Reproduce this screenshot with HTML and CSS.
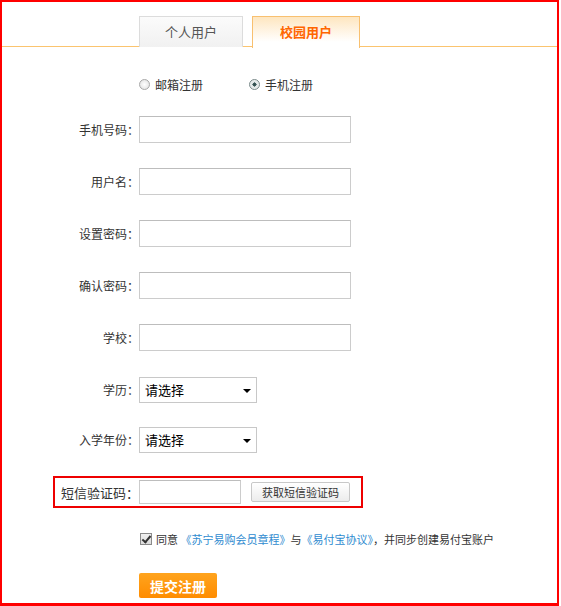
FILE: index.html
```html
<!DOCTYPE html>
<html lang="zh-CN">
<head>
    <meta charset="UTF-8">
    <title>校园用户注册</title>
    <link rel="stylesheet" href="styles.css">
</head>
<body>
    <div class="page">
        <div class="tabs">
            <div class="tab">个人用户</div>
            <div class="tab active">校园用户</div>
        </div>

        <div class="reg-type">
            <label class="radio-item"><span class="radio"></span>邮箱注册</label>
            <label class="radio-item"><span class="radio checked"></span>手机注册</label>
        </div>

        <form class="reg-form">
            <div class="row">
                <span class="label">手机号码：</span>
                <input type="text" class="field">
            </div>
            <div class="row">
                <span class="label">用户名：</span>
                <input type="text" class="field">
            </div>
            <div class="row">
                <span class="label">设置密码：</span>
                <input type="password" class="field">
            </div>
            <div class="row">
                <span class="label">确认密码：</span>
                <input type="password" class="field">
            </div>
            <div class="row">
                <span class="label">学校：</span>
                <input type="text" class="field">
            </div>
            <div class="row row-select">
                <span class="label">学历：</span>
                <div class="select">请选择<span class="arrow"></span></div>
            </div>
            <div class="row row-select">
                <span class="label">入学年份：</span>
                <div class="select">请选择<span class="arrow"></span></div>
            </div>
            <div class="sms-row">
                <span class="label">短信验证码：</span>
                <input type="text" class="field field-sms">
                <button type="button" class="btn-sms">获取短信验证码</button>
            </div>
            <div class="agree">
                <span class="checkbox"></span>
                <span>同意 <a href="#">《苏宁易购会员章程》</a>与<a href="#">《易付宝协议》</a>，并同步创建易付宝账户</span>
            </div>
            <div class="submit-row">
                <button type="submit" class="btn-submit">提交注册</button>
            </div>
        </form>
    </div>
</body>
</html>
```

FILE: styles.css
```css
/* Reset */
* {
    margin: 0;
    padding: 0;
    box-sizing: border-box;
}

body {
    font-family: "Noto Sans CJK SC", "Liberation Sans", sans-serif;
    font-size: 12px;
    color: #333;
    background: #fff;
}

/* Outer frame */
.page {
    width: 559px;
    height: 606px;
    border: 2px solid #f00;
    border-bottom-width: 3px;
    overflow: hidden;
}

/* Tabs */
.tabs {
    display: flex;
    gap: 9px;
    padding: 14px 0 0 137px;
    border-bottom: 1px solid #fbc46f;
    height: 45px;
}

.tab {
    width: 104px;
    height: 31px;
    line-height: 30px;
    text-align: center;
    font-size: 13px;
    color: #555;
    border: 1px solid #dcdcdc;
    border-bottom: none;
    background: linear-gradient(#fbfbfb, #f1f1f1);
}

.tab.active {
    width: 108px;
    color: #f60;
    font-weight: bold;
    border-color: #f8c070;
    background: linear-gradient(#fee6c0, #fff 80%);
    height: 32px;
    margin-bottom: -1px;
}

/* Register type radios */
.reg-type {
    display: flex;
    gap: 46px;
    padding-left: 137px;
    margin-top: 28px;
    height: 18px;
    align-items: center;
}

.radio-item {
    display: flex;
    align-items: center;
    gap: 5px;
    color: #333;
}

.radio {
    width: 11px;
    height: 11px;
    border-radius: 50%;
    border: 1px solid #a8a8a8;
    background: radial-gradient(#fff, #ddd);
}

.radio.checked {
    border-color: #7a8a8a;
    background: radial-gradient(circle, #2f4a4a 0, #3f5f5f 30%, #dfe6e6 35%, #f4f4f4 100%);
}

/* Form rows */
.reg-form {
    margin-top: 23px;
}

.row {
    display: flex;
    align-items: center;
    height: 27px;
    margin-bottom: 25px;
}

.row-select {
    margin-top: 2px;
    margin-bottom: 23px;
}

.label {
    width: 137px;
    text-align: right;
    color: #333;
}

.field {
    width: 212px;
    height: 27px;
    border: 1px solid #ccc;
    border-top-color: #bdbdbd;
    outline: none;
    padding: 0 4px;
    font-size: 12px;
}

.select {
    width: 118px;
    height: 26px;
    border: 1px solid #c8c8c8;
    display: flex;
    align-items: center;
    padding-left: 5px;
    font-size: 13px;
    color: #000;
    position: relative;
}

.arrow {
    position: absolute;
    right: 5px;
    top: 11px;
    border-left: 4px solid transparent;
    border-right: 4px solid transparent;
    border-top: 4px solid #000;
}

/* SMS row (highlighted) */
.sms-row {
    display: flex;
    align-items: center;
    width: 310px;
    height: 32px;
    margin: 3px 0 0 51px;
    border: 2px solid #e00;
}

.sms-row .label {
    width: 84px;
    font-size: 13px;
}

.field-sms {
    width: 102px;
    height: 24px;
}

.btn-sms {
    margin-left: 10px;
    width: 99px;
    height: 20px;
    font-family: inherit;
    font-size: 11px;
    color: #333;
    border: 1px solid #c8c8c8;
    border-radius: 2px;
    background: linear-gradient(#fff, #ececec);
    cursor: pointer;
}

/* Agreement */
.agree {
    display: flex;
    align-items: center;
    gap: 4px;
    margin: 23px 0 0 138px;
    height: 16px;
    font-size: 11px;
    color: #333;
}

.checkbox {
    width: 12px;
    height: 12px;
    border: 1px solid #8a8a8a;
    background: linear-gradient(#f0f0f0, #dcdcdc);
    position: relative;
}

.checkbox::after {
    content: "";
    position: absolute;
    left: 3px;
    top: 0;
    width: 3px;
    height: 7px;
    border: solid #333;
    border-width: 0 2px 2px 0;
    transform: rotate(40deg);
}

.agree a {
    color: #2f8bd0;
    text-decoration: none;
}

/* Submit */
.submit-row {
    margin: 26px 0 0 137px;
}

.btn-submit {
    width: 78px;
    height: 25px;
    border: none;
    border-radius: 2px;
    background: linear-gradient(#ffa41e, #ff8c00);
    color: #fff;
    font-family: inherit;
    font-size: 14px;
    font-weight: bold;
    cursor: pointer;
}
```
